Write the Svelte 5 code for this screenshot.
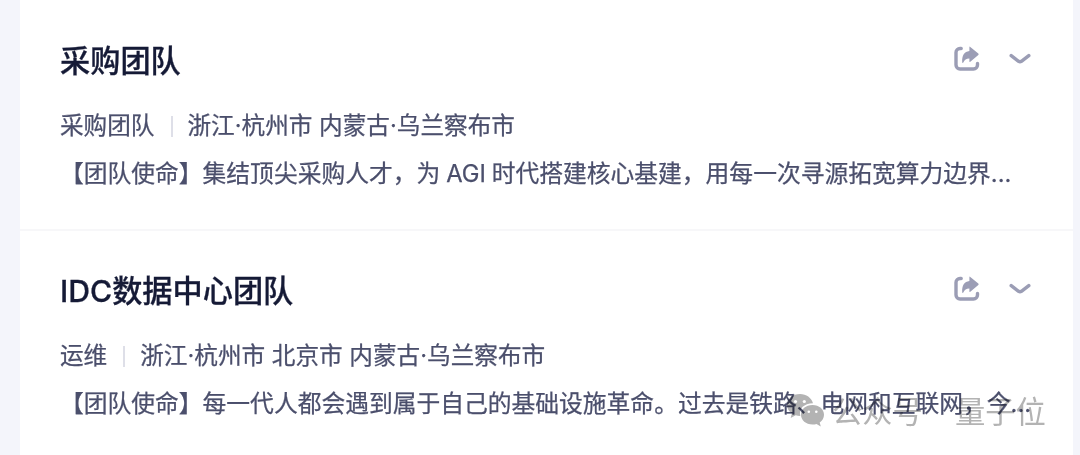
<script lang="ts">
	type Team = {
		title: string;
		category: string;
		cities: string;
		summary: string;
	};

	const teams: Team[] = [
		{
			title: '采购团队',
			category: '采购团队',
			cities: '浙江·杭州市 内蒙古·乌兰察布市',
			summary: '【团队使命】集结顶尖采购人才，为 AGI 时代搭建核心基建，用每一次寻源拓宽算力边界...'
		},
		{
			title: 'IDC数据中心团队',
			category: '运维',
			cities: '浙江·杭州市 北京市 内蒙古·乌兰察布市',
			summary: '【团队使命】每一代人都会遇到属于自己的基础设施革命。过去是铁路、电网和互联网，今...'
		}
	];
</script>

<main>
	<div class="list">
		{#each teams as team}
			<article>
				<header>
					<h2>{team.title}</h2>
					<div class="actions">
						<button aria-label="分享">
							<svg width="26" height="26" viewBox="0 0 26 26">
								<path
									class="line"
									d="M7.2 2.500H6A4 4 0 0 0 2 6.500V19A4 4 0 0 0 6 23H19.500A4 4 0 0 0 23.500 19V17.500"
								/>
								<path
									class="fill"
									d="M15.400 1.200Q15.400.2 16.300.9L24.300 7.500Q25.100 8.200 24.300 8.900L16.300 15.700Q15.400 16.400 15.400 15.300V12.500C12.500 12.400 10.600 13.600 9.300 16.400Q8.400 17.600 8.200 16C7.800 9.500 10.300 5.700 15.400 5Z"
								/>
							</svg>
						</button>
						<button aria-label="展开">
							<svg width="22" height="12" viewBox="0 0 22 12">
								<path class="line" d="M2.200 2.600L9.600 8.300Q11 9.200 12.400 8.300L19.800 2.600" />
							</svg>
						</button>
					</div>
				</header>
				<div class="meta">
					<span>{team.category}</span>
					<i></i>
					<span>{team.cities}</span>
				</div>
				<p>{team.summary}</p>
			</article>
		{/each}
	</div>

	<div class="watermark">
		<svg width="39" height="35" viewBox="0 0 39 35">
			<path
				d="M14 1C6.500 1 1 5.700 1 11.800c0 3.600 1.900 6.600 4.900 8.500L4.700 25l5-2.700c1.400.4 2.900.6 4.600.6C12.600 15.500 18 10.500 27 10.300C25.500 4.700 20.300 1 14 1Z"
			/>
			<path
				d="M26.500 12C19.700 12 15 16.400 15 21.800s4.900 9.800 11.500 9.800c1.500 0 2.800-.2 4-.6l4.300 2.500-1.100-3.900c2.600-1.800 4.300-4.500 4.300-7.800C38 16.400 33.200 12 26.500 12Z"
			/>
			<g class="eyes">
				<circle cx="9.500" cy="8.500" r="1.600" />
				<circle cx="18.300" cy="8.500" r="1.600" />
				<circle cx="22.800" cy="18.800" r="1.300" />
				<circle cx="30.300" cy="18.800" r="1.300" />
			</g>
		</svg>
		<span class="kind">公众号</span>
		<span>量子位</span>
	</div>
</main>

<style>
	:global(body) {
		background: #f4f5fb;
	}

	main {
		position: relative;
		height: 455px;
		padding: 0 7px 0 20px;
		box-sizing: border-box;
		overflow: hidden;
		font-family: Inter, 'Noto Sans CJK SC', sans-serif;
		color: #4b4f6c;
	}

	.list {
		height: 100%;
		background: #fff;
	}

	article {
		height: 229px;
		padding: 40px 42px 0 40px;
		box-sizing: border-box;
	}

	article + article {
		height: 226px;
		padding-top: 39px;
		border-top: 2px solid #f7f7f9;
	}

	header {
		display: flex;
		justify-content: space-between;
		height: 42px;
	}

	h2 {
		margin: 0;
		font-size: 30.2px;
		font-weight: 500;
		line-height: 42px;
		color: #151a36;
		-webkit-text-stroke: 0.3px #151a36;
	}

	.actions {
		display: flex;
		align-items: center;
		gap: 29px;
		height: 37px;
	}

	button {
		display: flex;
		padding: 0;
		border: 0;
		background: none;
	}

	.line {
		fill: none;
		stroke: #9b9db5;
		stroke-width: 3.4;
		stroke-linecap: round;
		stroke-linejoin: round;
	}

	.fill {
		fill: #9b9db5;
	}

	.meta {
		display: flex;
		align-items: center;
		height: 34px;
		margin-top: 27px;
		font-size: 23.64px;
		line-height: 34px;
		white-space: nowrap;
		-webkit-text-stroke: 0.25px #4b4f6c;
	}

	.meta i {
		width: 2px;
		height: 21px;
		margin: 0 15px 0 16px;
		background: #dedfe8;
	}

	p {
		margin: 14px 0 0;
		font-size: 23.78px;
		line-height: 34px;
		white-space: nowrap;
		word-spacing: -0.8px;
		-webkit-text-stroke: 0.25px #4b4f6c;
	}

	.watermark {
		position: absolute;
		left: 786px;
		top: 393px;
		display: flex;
		font-size: 30.3px;
		line-height: 38px;
		color: #b3b3b3;
		mix-blend-mode: multiply;
		white-space: nowrap;
	}

	.watermark svg {
		fill: #b3b3b3;
	}

	.eyes {
		fill: #fff;
	}

	.kind {
		margin: 0 32px 0 7px;
	}
</style>
